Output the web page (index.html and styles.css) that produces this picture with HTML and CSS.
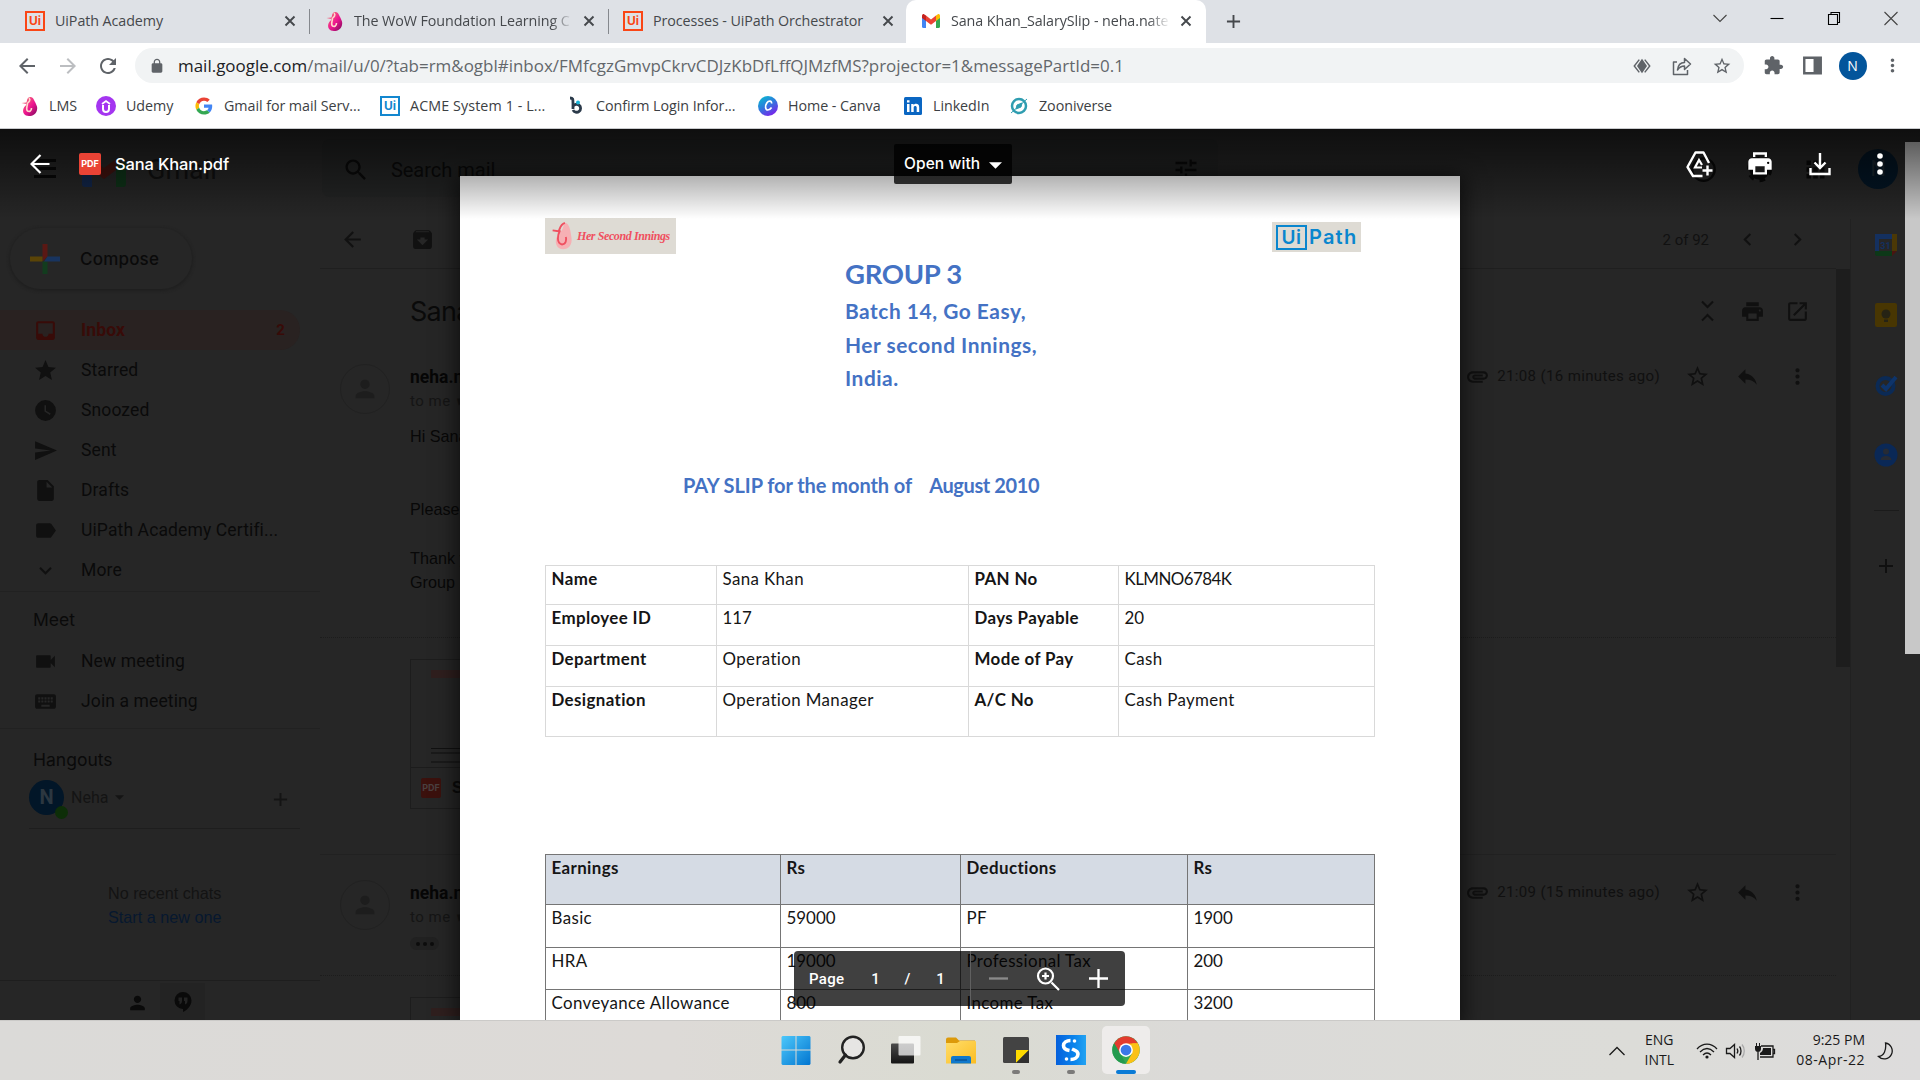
FILE: index.html
```html
<!DOCTYPE html>
<html lang="en">
<head>
<meta charset="utf-8">
<title>Sana Khan_SalarySlip</title>
<link rel="stylesheet" href="styles.css">
</head>
<body>
<svg width="0" height="0" class="defs">
  <defs>
    <linearGradient id="flame" x1="0" y1="0" x2="1" y2="1"><stop offset="0" stop-color="#f58a6b"/><stop offset=".55" stop-color="#ee1590"/><stop offset="1" stop-color="#7a0a5a"/></linearGradient>
    <linearGradient id="canva" x1="0" y1="0" x2=".6" y2="1"><stop offset="0" stop-color="#05c3cf"/><stop offset=".5" stop-color="#2a7fdc"/><stop offset="1" stop-color="#7428ea"/></linearGradient>
    <linearGradient id="win" x1="0" y1="0" x2="1" y2="1"><stop offset="0" stop-color="#4cc8fb"/><stop offset="1" stop-color="#0275d0"/></linearGradient>
    <linearGradient id="fold" x1="0" y1="0" x2="1" y2="1"><stop offset="0" stop-color="#ffdd6a"/><stop offset="1" stop-color="#fbbd22"/></linearGradient>
    <linearGradient id="dark" x1="0" y1="0" x2="0" y2="1"><stop offset="0" stop-color="#4a4a4a"/><stop offset="1" stop-color="#151515"/></linearGradient>
    <linearGradient id="sblue" x1="0" y1="0" x2="1" y2="0"><stop offset="0" stop-color="#0560dc"/><stop offset=".6" stop-color="#0a84ec"/><stop offset="1" stop-color="#22a3f2"/></linearGradient>
  </defs>
  <symbol id="i-star" viewBox="0 0 24 24"><path d="M12 17.27L18.18 21l-1.64-7.03L22 9.24l-7.19-.61L12 2 9.19 8.63 2 9.24l5.46 4.73L5.82 21z"/></symbol>
  <symbol id="i-starb" viewBox="0 0 24 24"><path d="M22 9.24l-7.19-.62L12 2 9.19 8.63 2 9.24l5.46 4.73L5.82 21 12 17.27 18.18 21l-1.63-7.03L22 9.24zM12 15.4l-3.76 2.27 1-4.28-3.32-2.88 4.38-.38L12 6.1l1.71 4.04 4.38.38-3.32 2.88 1 4.28L12 15.4z"/></symbol>
  <symbol id="i-clock" viewBox="0 0 24 24"><path fill-rule="evenodd" d="M12 2a10 10 0 1 0 0 20 10 10 0 0 0 0-20zm4.2 14.2L11 13V7h1.5v5.2l4.5 2.7-.8 1.3z"/></symbol>
  <symbol id="i-send" viewBox="0 0 24 24"><path d="M2.01 21L23 12 2.01 3 2 10l15 2-15 2z"/></symbol>
  <symbol id="i-file" viewBox="0 0 24 24"><path d="M6 2c-1.1 0-2 .9-2 2v16c0 1.1.9 2 2 2h12c1.1 0 2-.9 2-2V8l-6-6H6zm7 7V3.5L18.5 9H13z"/></symbol>
  <symbol id="i-label" viewBox="0 0 24 24"><path d="M17.63 5.84C17.27 5.33 16.67 5 16 5L5 5.01C3.9 5.01 3 5.9 3 7v10c0 1.1.9 1.99 2 1.99L16 19c.67 0 1.27-.33 1.63-.84L22 12l-4.37-6.16z"/></symbol>
  <symbol id="i-more" viewBox="0 0 24 24"><path d="M16.59 8.59L12 13.17 7.41 8.59 6 10l6 6 6-6z"/></symbol>
  <symbol id="i-cam" viewBox="0 0 24 24"><path d="M17 10.5V7c0-.55-.45-1-1-1H4c-.55 0-1 .45-1 1v10c0 .55.45 1 1 1h12c.55 0 1-.45 1-1v-3.5l4 4v-11l-4 4z"/></symbol>
  <symbol id="i-kbd" viewBox="0 0 24 24"><path d="M20 5H4c-1.1 0-1.99.9-1.99 2L2 17c0 1.1.9 2 2 2h16c1.1 0 2-.9 2-2V7c0-1.1-.9-2-2-2zm-9 3h2v2h-2V8zm0 3h2v2h-2v-2zM8 8h2v2H8V8zm0 3h2v2H8v-2zm-1 2H5v-2h2v2zm0-3H5V8h2v2zm9 7H8v-2h8v2zm0-4h-2v-2h2v2zm0-3h-2V8h2v2zm3 3h-2v-2h2v2zm0-3h-2V8h2v2z"/></symbol>
  <symbol id="i-inbox" viewBox="0 0 24 24"><path d="M19 3H4.99c-1.11 0-1.98.89-1.98 2L3 19c0 1.1.88 2 1.99 2H19c1.1 0 2-.9 2-2V5c0-1.11-.9-2-2-2zm0 12h-4c0 1.66-1.35 3-3 3s-3-1.34-3-3H4.99V5H19v10z"/></symbol>
  <symbol id="i-arch" viewBox="0 0 24 24"><path d="M20.54 5.23l-1.39-1.68C18.88 3.21 18.47 3 18 3H6c-.47 0-.88.21-1.16.55L3.46 5.23C3.17 5.57 3 6.02 3 6.5V19c0 1.1.9 2 2 2h14c1.1 0 2-.9 2-2V6.5c0-.48-.17-.93-.46-1.27zM12 17.5L6.5 12H10v-2h4v2h3.5L12 17.5zM5.12 5l.81-1h12l.94 1H5.12z"/></symbol>
  <symbol id="i-back" viewBox="0 0 24 24"><path d="M20 11H7.83l5.59-5.59L12 4l-8 8 8 8 1.41-1.41L7.83 13H20v-2z"/></symbol>
  <symbol id="i-person" viewBox="0 0 24 24"><path d="M12 12c2.21 0 4-1.79 4-4s-1.79-4-4-4-4 1.79-4 4 1.79 4 4 4zm0 2c-2.67 0-8 1.34-8 4v2h16v-2c0-2.66-5.33-4-8-4z"/></symbol>
  <symbol id="i-print" viewBox="0 0 24 24"><path d="M19 8H5c-1.66 0-3 1.34-3 3v6h4v4h12v-4h4v-6c0-1.66-1.34-3-3-3zm-3 11H8v-5h8v5zm3-7c-.55 0-1-.45-1-1s.45-1 1-1 1 .45 1 1-.45 1-1 1zm-1-9H6v4h12V3z"/></symbol>
  <symbol id="i-dots" viewBox="0 0 24 24"><path d="M12 8c1.1 0 2-.9 2-2s-.9-2-2-2-2 .9-2 2 .9 2 2 2zm0 2c-1.1 0-2 .9-2 2s.9 2 2 2 2-.9 2-2-.9-2-2-2zm0 6c-1.1 0-2 .9-2 2s.9 2 2 2 2-.9 2-2-.9-2-2-2z"/></symbol>
  <symbol id="i-reply" viewBox="0 0 24 24"><path d="M10 9V5l-7 7 7 7v-4.1c5 0 8.5 1.6 11 5.1-1-5-4-10-11-11z"/></symbol>
  <symbol id="i-open" viewBox="0 0 24 24"><path d="M19 19H5V5h7V3H5c-1.11 0-2 .9-2 2v14c0 1.1.89 2 2 2h14c1.1 0 2-.9 2-2v-7h-2v7zM14 3v2h3.59l-9.83 9.83 1.41 1.41L19 6.41V10h2V3h-7z"/></symbol>
  <symbol id="i-search" viewBox="0 0 24 24"><path d="M15.5 14h-.79l-.28-.27C15.41 12.59 16 11.11 16 9.5 16 5.91 13.09 3 9.5 3S3 5.91 3 9.5 5.91 16 9.5 16c1.61 0 3.09-.59 4.23-1.57l.27.28v.79l5 4.99L20.49 19l-4.99-5zm-6 0C7.01 14 5 11.99 5 9.5S7.01 5 9.5 5 14 7.01 14 9.5 11.99 14 9.5 14z"/></symbol>
  <symbol id="i-tune" viewBox="0 0 24 24"><path d="M3 17v2h6v-2H3zM3 5v2h10V5H3zm10 16v-2h8v-2h-8v-2h-2v6h2zM7 9v2H3v2h4v2h2V9H7zm14 4v-2H11v2h10zm-6-4h2V7h4V5h-4V3h-2v6z"/></symbol>
  <symbol id="i-clip" viewBox="0 0 24 24"><path d="M2 12.5C2 9.46 4.46 7 7.5 7H18c2.21 0 4 1.79 4 4s-1.79 4-4 4H9.5C8.12 15 7 13.88 7 12.5S8.12 10 9.5 10H17v2H9.41c-.55 0-.55 1 0 1H18c1.1 0 2-.9 2-2s-.9-2-2-2H7.5C5.57 9 4 10.57 4 12.5S5.57 16 7.5 16H17v2H7.5C4.46 18 2 15.54 2 12.5z"/></symbol>
  <symbol id="i-ext" viewBox="0 0 24 24"><path d="M20.5 11H19V7c0-1.1-.9-2-2-2h-4V3.5C13 2.12 11.88 1 10.5 1S8 2.12 8 3.5V5H4c-1.1 0-1.99.9-1.99 2v3.8H3.5c1.49 0 2.7 1.21 2.7 2.7s-1.21 2.7-2.7 2.7H2V20c0 1.1.9 2 2 2h3.8v-1.5c0-1.49 1.21-2.7 2.7-2.7 1.49 0 2.7 1.21 2.7 2.7V22H17c1.1 0 2-.9 2-2v-4h1.5c1.38 0 2.5-1.12 2.5-2.5S21.88 11 20.5 11z"/></symbol>
  <symbol id="i-reload" viewBox="0 0 24 24"><path d="M17.65 6.35C16.2 4.9 14.21 4 12 4c-4.42 0-7.99 3.58-7.99 8s3.57 8 7.99 8c3.73 0 6.84-2.55 7.73-6h-2.08c-.82 2.33-3.04 4-5.65 4-3.31 0-6-2.69-6-6s2.69-6 6-6c1.66 0 3.14.69 4.22 1.78L13 11h7V4l-2.35 2.35z"/></symbol>
  <symbol id="i-lock" viewBox="0 0 24 24"><path d="M18 8h-1V6c0-2.76-2.24-5-5-5S7 3.24 7 6v2H6c-1.1 0-2 .9-2 2v10c0 1.1.9 2 2 2h12c1.1 0 2-.9 2-2V10c0-1.1-.9-2-2-2zm-2.9 0H8.9V6c0-1.71 1.39-3.1 3.1-3.1 1.71 0 3.1 1.39 3.1 3.1v2z"/></symbol>
  <symbol id="i-x" viewBox="0 0 12 12"><path d="M1.5 1.5l9 9m0-9l-9 9" fill="none" stroke="currentColor" stroke-width="1.9"/></symbol>
  <symbol id="i-plus" viewBox="0 0 16 16"><path d="M8 1v14M1 8h14" fill="none" stroke="currentColor" stroke-width="2"/></symbol>
  <symbol id="i-caret" viewBox="0 0 10 5"><path d="M0 0h10L5 5z"/></symbol>
  <symbol id="i-flame" viewBox="0 0 18 20"><path d="M8 2c2-2 5-1 6 2 2 4 4 7 3 10-1 4-4 6-8 6-4.500 0-7-3.500-5.500-7.500C4.500 10 6 10 6.500 8L1.500 7l5-.5C7 5 7 3 8 2z" fill="url(#flame)"/><path d="M7.500 7c0 3-2 6 0 8 2 1 4 0 4-3M9 2c2 2 0 4-1.500 5" fill="none" stroke="#ffd8cc" stroke-width="1.600"/></symbol>
</svg>

<header class="browser">
  <div class="tabstrip">
    <div class="tab"><span class="fav ui orange">Ui</span><span class="title">UiPath Academy</span><svg class="close"><use href="#i-x"/></svg></div>
    <div class="tab"><svg class="fav"><use href="#i-flame"/></svg><span class="title fade">The WoW Foundation Learning C</span><svg class="close"><use href="#i-x"/></svg></div>
    <div class="tab"><span class="fav ui orange">Ui</span><span class="title">Processes - UiPath Orchestrator</span><svg class="close"><use href="#i-x"/></svg></div>
    <div class="tab active"><svg class="fav" viewBox="0 0 20 20"><path d="M1 5v10.500a1.500 1.500 0 0 0 1.500 1.500H5V8z" fill="#4285f4"/><path d="M19 5v10.500a1.500 1.500 0 0 1-1.500 1.500H15V8z" fill="#34a853"/><path d="M5 4.500L10 8.500l5-4V10l-5 3.800L5 10z" fill="#ea4335"/><path d="M15 4.500l1.600-1.100C17.800 2.600 19 3.400 19 5v2l-4 3z" fill="#fbbc04"/><path d="M5 4.500L3.400 3.400C2.200 2.600 1 3.400 1 5v2l4 3z" fill="#c5221f"/></svg><span class="title fade">Sana Khan_SalarySlip - neha.nate</span><svg class="close"><use href="#i-x"/></svg></div>
    <svg class="newtab"><use href="#i-plus"/></svg>
    <div class="winctl">
      <svg viewBox="0 0 20 20"><path d="M3.500 7l6.500 6.500L16.500 7"/></svg>
      <svg viewBox="0 0 20 20" class="blk"><path d="M3.500 10.500h13"/></svg>
      <svg viewBox="0 0 20 20" class="blk"><path d="M4.500 6.500h9v10h-9zM7 6V4.500h8.500v10H14"/></svg>
      <svg viewBox="0 0 20 20"><path d="M3.500 4l13 13m0-13l-13 13"/></svg>
    </div>
  </div>
  <div class="toolbar">
    <div class="nav">
      <svg><use href="#i-back"/></svg><svg class="off"><use href="#i-back"/></svg><svg><use href="#i-reload"/></svg>
    </div>
    <div class="omnibox">
      <svg class="lock"><use href="#i-lock"/></svg>
      <span class="url"><b>mail.google.com</b>/mail/u/0/?tab=rm&amp;ogbl#inbox/FMfcgzGmvpCkrvCDJzKbDfLffQJMzfMS?projector=1&amp;messagePartId=0.1</span>
      <div class="omni-icons">
        <svg viewBox="-1 -1 22 22"><path d="M7 3L1.500 10 7 17M13 3l5.500 7-5.500 7" fill="none" stroke="#5f6368" stroke-width="1.600"/><path d="M10 2l5.500 8-5.500 8-5.500-8z"/></svg>
        <svg viewBox="0 0 20 20"><path d="M5 6H1.500v12.500h14V14M5.500 14c.5-5 3-7.500 7-7.500V2.500l6 5.500-6 5.500V10c-3 0-5 1-7 4z" fill="none" stroke="#5f6368" stroke-width="1.500" stroke-linejoin="round"/></svg>
        <svg><use href="#i-starb"/></svg>
      </div>
    </div>
    <div class="tools">
      <svg><use href="#i-ext"/></svg>
      <svg viewBox="0 0 20 20"><path fill-rule="evenodd" d="M1 1.500h18v17H1zM3.300 3.800v12.400H11V3.800z"/></svg>
      <span class="avatar">N</span>
      <svg><use href="#i-dots"/></svg>
    </div>
  </div>
  <nav class="bookmarks">
    <a><svg><use href="#i-flame"/></svg><span>LMS</span></a>
    <a><svg viewBox="0 0 20 20"><circle cx="10" cy="10" r="10" fill="#a435f0"/><path d="M6 8l4-3 4 3" fill="none" stroke="#fff" stroke-width="1.700"/><path d="M7 9v4a3 3 0 0 0 6 0V9" fill="none" stroke="#fff" stroke-width="2"/></svg><span>Udemy</span></a>
    <a><svg viewBox="-4 -4 56 56"><path fill="#EA4335" d="M24 9.500c3.540 0 6.710 1.220 9.210 3.600l6.850-6.850C35.900 2.380 30.470 0 24 0 14.620 0 6.510 5.380 2.560 13.220l7.980 6.190C12.430 13.720 17.740 9.500 24 9.500z"/><path fill="#4285F4" d="M46.980 24.550c0-1.570-.15-3.090-.38-4.550H24v9.020h12.940c-.58 2.960-2.260 5.480-4.780 7.180l7.730 6c4.510-4.180 7.090-10.360 7.090-17.650z"/><path fill="#FBBC05" d="M10.530 28.590c-.48-1.450-.76-2.990-.76-4.590s.27-3.140.76-4.590l-7.980-6.190C.92 16.460 0 20.120 0 24s.92 7.540 2.560 10.780l7.970-6.190z"/><path fill="#34A853" d="M24 48c6.480 0 11.930-2.130 15.890-5.810l-7.730-6c-2.150 1.450-4.920 2.300-8.160 2.300-6.260 0-11.570-4.220-13.470-9.910l-7.980 6.190C6.510 42.620 14.620 48 24 48z"/></svg><span>Gmail for mail Serv...</span></a>
    <a class="wide"><span class="ui blue">Ui</span><span>ACME System 1 - L...</span></a>
    <a><svg viewBox="0 0 20 20"><path d="M4 2c3 0 3 1 3 5v6M7 10.500a4 4 0 1 1 0 3.500" fill="none" stroke="#2b3a4a" stroke-width="2.800"/><circle cx="12" cy="6.500" r="2" fill="#19b5d8"/></svg><span>Confirm Login Infor...</span></a>
    <a><svg viewBox="0 0 20 20"><circle cx="10" cy="10" r="10" fill="url(#canva)"/><path d="M13.500 7.500c.5-3-3-3-4.700-.5-2 3-1.500 7 1 7 2 0 3-1.300 3.800-2.500" fill="none" stroke="#fff" stroke-width="1.700"/></svg><span>Home - Canva</span></a>
    <a><svg viewBox="0 0 20 20"><rect x="1" y="1" width="18" height="18" rx="1.500" fill="#0a66c2"/><path d="M4 8h2.500v8H4zM4 4.300h2.500v2.300H4zM8.200 8h2.400v1.200c1.400-2.200 5.600-1.800 5.600 2V16h-2.500v-4.500c0-2-3-2-3 0V16H8.200z" fill="#fff"/></svg><span>LinkedIn</span></a>
    <a><svg viewBox="0 0 20 20"><circle cx="10" cy="10" r="7" fill="none" stroke="#2f9db0" stroke-width="2.500"/><path d="M2 17L18 3M13 7l-5 2-1 4 5-2z" fill="#2f9db0" stroke="#2f9db0"/></svg><span>Zooniverse</span></a>
  </nav>
</header>

<main class="view">
  <div class="gmail">
    <div class="ghead">
      <div class="burger"><i></i><i></i><i></i></div>
      <svg class="glogo" viewBox="0 0 44 34"><path d="M0 8v23a3 3 0 0 0 3 3h7V14z" fill="#12264a"/><path d="M44 8v23a3 3 0 0 1-3 3h-7V14z" fill="#0e3318"/><path d="M10 6l12 9L34 6v11L22 26 10 17z" fill="#42130f"/></svg>
      <span class="gname">Gmail</span>
      <div class="gsearch"><svg><use href="#i-search"/></svg><span>Search mail</span><svg class="tune"><use href="#i-tune"/></svg></div>
      <div class="gicons">
        <svg viewBox="0 0 24 24"><circle cx="12" cy="12" r="10" fill="none" stroke="currentColor" stroke-width="2"/></svg>
        <svg viewBox="0 0 24 24"><circle cx="12" cy="12" r="7" fill="none" stroke="currentColor" stroke-width="4"/><circle cx="12" cy="12" r="10" fill="none" stroke="currentColor" stroke-width="2.500" stroke-dasharray="5 5.470"/></svg>
        <svg viewBox="0 0 24 24"><path d="M4 4h4v4H4zM10 4h4v4h-4zM16 4h4v4h-4zM4 10h4v4H4zM10 10h4v4h-4zM16 10h4v4h-4zM4 16h4v4H4zM10 16h4v4h-4zM16 16h4v4h-4z"/></svg>
        <span class="gav">N</span>
      </div>
    </div>
    <div class="gbody">
      <aside class="side">
        <div class="compose"><svg viewBox="0 0 30 30"><path d="M12.500 0h5v12.500l-5 5z" fill="#5a1814"/><path d="M0 12.500h12.500v5H0z" fill="#5a4407"/><path d="M12.500 17.500h5V30h-5z" fill="#123c1e"/><path d="M17.500 12.500H30v5H14z" fill="#18345f"/></svg><span>Compose</span></div>
        <ul class="folders">
          <li class="sel"><svg><use href="#i-inbox"/></svg><span>Inbox</span><em>2</em></li>
          <li><svg><use href="#i-star"/></svg><span>Starred</span></li>
          <li><svg><use href="#i-clock"/></svg><span>Snoozed</span></li>
          <li><svg><use href="#i-send"/></svg><span>Sent</span></li>
          <li><svg><use href="#i-file"/></svg><span>Drafts</span></li>
          <li><svg><use href="#i-label"/></svg><span>UiPath Academy Certifi...</span></li>
          <li><svg><use href="#i-more"/></svg><span>More</span></li>
        </ul>
        <div class="meet">
          <h3>Meet</h3>
          <ul class="folders">
            <li><svg><use href="#i-cam"/></svg><span>New meeting</span></li>
            <li><svg><use href="#i-kbd"/></svg><span>Join a meeting</span></li>
          </ul>
        </div>
        <div class="hang">
          <h3>Hangouts</h3>
          <div class="me"><span class="hav">N<i></i></span><span>Neha</span><svg class="car"><use href="#i-caret"/></svg><svg class="add"><use href="#i-plus"/></svg></div>
          <p>No recent chats<br><a>Start a new one</a></p>
        </div>
        <div class="sidetabs"><span><svg><use href="#i-person"/></svg></span><span class="on"><svg viewBox="0 0 18 20"><path fill-rule="evenodd" d="M9 0a8.500 8.500 0 0 0 0 17v3c4-2 8.500-6 8.500-11.500A8.500 8.500 0 0 0 9 0zM4.500 5.500H8V9c0 2-1 3-2.500 3.500V9h-1zm5.500 0h3.500V9c0 2-1 3-2.500 3.500V9h-1z"/></svg></span></div>
      </aside>
      <section class="mail">
        <div class="mbar"><svg><use href="#i-back"/></svg><svg class="b2"><use href="#i-arch"/></svg><span class="count">2 of 92</span><svg class="chl" viewBox="0 0 24 24"><path d="M15.400 7.400L14 6l-6 6 6 6 1.400-1.400L10.800 12z"/></svg><svg viewBox="0 0 24 24"><path d="M8.600 16.600L10 18l6-6-6-6-1.400 1.400L13.200 12z"/></svg></div>
        <div class="subject"><h1>Sana Khan_SalarySlip</h1><div class="acts"><svg viewBox="0 0 24 24"><path d="M7.400 18.600L6 20l1.400 1.400L12 16.800l4.600 4.600L18 20l-6-6zM16.600 1.600L12 6.200 7.400 1.600 6 3l6 6 6-6z"/></svg><svg><use href="#i-print"/></svg><svg><use href="#i-open"/></svg></div></div>
        <article class="msg first">
          <div class="mhead"><span class="pic"><svg><use href="#i-person"/></svg></span><div class="who"><b>neha.nate</b><small>to me <i>▾</i></small></div><div class="meta"><svg class="clip"><use href="#i-clip"/></svg><span>21:08 (16 minutes ago)</span><svg><use href="#i-starb"/></svg><svg><use href="#i-reply"/></svg><svg><use href="#i-dots"/></svg></div></div>
          <div class="txt"><p>Hi Sana,</p><p class="gap1">Please</p><p class="gap2">Thank you</p><p>Group 3</p></div>
          <div class="att"><div class="thumb"><i></i><em></em></div><div class="cap"><span class="pdf">PDF</span><b>S</b></div></div>
        </article>
        <article class="msg next">
          <div class="mhead"><span class="pic"><svg><use href="#i-person"/></svg></span><div class="who"><b>neha.nate</b><small>to me <i>▾</i></small></div><div class="meta"><svg class="clip"><use href="#i-clip"/></svg><span>21:09 (15 minutes ago)</span><svg><use href="#i-starb"/></svg><svg><use href="#i-reply"/></svg><svg><use href="#i-dots"/></svg></div></div>
          <div class="more"><div class="ell"><i></i><i></i><i></i></div></div>
          <div class="att"><div class="thumb"><i></i></div></div>
        </article>
      </section>
      <div class="track"><i></i></div>
      <aside class="apps">
        <svg viewBox="0 0 24 24"><path d="M1 1h17v17H1z" fill="#14305f"/><path d="M18 1h5v17h-5z" fill="#4b3806"/><path d="M1 18h17v5H3a2 2 0 0 1-2-2z" fill="#0d3818"/><path d="M18 18h5l-5 5z" fill="#4a1510"/><path d="M5 6h13v12H5z" fill="#262626"/><text x="11.500" y="15.500" text-anchor="middle" class="cal">31</text></svg>
        <svg viewBox="0 0 24 24"><rect x="1" width="22" height="24" rx="2" fill="#483602"/><circle cx="12" cy="11" r="4.500" fill="#262314"/><path d="M10 16.500h4v2.500h-4z" fill="#262314"/></svg>
        <svg viewBox="0 0 24 24"><circle cx="11.500" cy="13" r="8" fill="none" stroke="#0b2a55" stroke-width="4"/><path d="M8 12l4 4L22 4" fill="none" stroke="#0e346a" stroke-width="4"/></svg>
        <svg viewBox="0 0 24 24"><circle cx="12" cy="12" r="11.500" fill="#0a2856"/><circle cx="12" cy="8.500" r="3" fill="#262b35"/><path d="M6.500 17c0-5.500 11-5.500 11 0z" fill="#262b35"/></svg>
        <hr>
        <svg class="add"><use href="#i-plus"/></svg>
        <svg class="last" viewBox="0 0 24 24"><path d="M8 18l6-6-6-6" fill="none" stroke="#0a0a0a" stroke-width="2.500"/></svg>
      </aside>
    </div>
  </div>

  <div class="viewer">
    <div class="page">
      <div class="logos">
        <div class="hsi"><svg viewBox="0 0 24 36"><path d="M13 4c6-1 7 9 8 16s-3 12-9 12-9-6-7-12 7-5 8-16z" fill="#f6b0b4"/><path d="M14 4c-6 2-5 8-7 9l-6-1M9 12c-3 5-4 14 2 15 4 0 5-5 4-8" fill="none" stroke="#ef5060" stroke-width="2"/></svg><span>Her Second Innings</span></div>
        <div class="uip"><b>Ui</b><span>Path</span></div>
      </div>
      <div class="company"><h2>GROUP 3</h2><p>Batch 14, Go Easy,</p><p>Her second Innings,</p><p>India.</p></div>
      <h3 class="slip"><span>PAY SLIP for the month of</span><span class="month">August 2010</span></h3>
      <table class="info">
        <colgroup><col class="c1"><col class="c2"><col class="c3"><col class="c4"></colgroup>
        <tr class="r39"><th>Name</th><td>Sana Khan</td><th>PAN No</th><td class="pan">KLMNO6784K</td></tr>
        <tr class="r41"><th>Employee ID</th><td class="n">117</td><th>Days Payable</th><td class="n">20</td></tr>
        <tr class="r42"><th>Department</th><td>Operation</td><th>Mode of Pay</th><td>Cash</td></tr>
        <tr class="r50"><th>Designation</th><td>Operation Manager</td><th>A/C No</th><td>Cash Payment</td></tr>
      </table>
      <table class="pay">
        <colgroup><col class="c1"><col class="c2"><col class="c3"><col class="c4"></colgroup>
        <tr class="r50"><th>Earnings</th><th>Rs</th><th>Deductions</th><th>Rs</th></tr>
        <tr class="r43"><td>Basic</td><td class="n">59000</td><td>PF</td><td class="n">1900</td></tr>
        <tr class="r43"><td>HRA</td><td class="n">19000</td><td>Professional Tax</td><td class="n">200</td></tr>
        <tr class="r43"><td>Conveyance Allowance</td><td class="n">800</td><td>Income Tax</td><td class="n">3200</td></tr>
      </table>
    </div>
    <i class="vscroll"></i>
    <div class="vbar">
      <svg class="vback" viewBox="0 0 20 20"><path d="M19.500 10H2M10.500 1L1.500 10l9 9" fill="none" stroke="#fff" stroke-width="2.200"/></svg>
      <span class="pdf">PDF</span><span class="vname">Sana Khan.pdf</span>
      <div class="openwith"><span>Open with</span><svg><use href="#i-caret"/></svg></div>
      <div class="vicons">
        <svg viewBox="0 0 28 28"><path d="M16.500 26H7L1.500 17 9.500 2.500h8L23 13" fill="none" stroke="#fff" stroke-width="2.400" stroke-linejoin="round"/><path d="M16 17.500H9L13 10l3 5" fill="none" stroke="#fff" stroke-width="2.200"/><path d="M21.500 15.500v10M16.500 20.500h10" stroke="#fff" stroke-width="2.400"/></svg>
        <svg viewBox="0 0 24 24"><path fill-rule="evenodd" d="M19 7H5c-1.660 0-3 1.340-3 3v7h4v4h12v-4h4v-7c0-1.660-1.340-3-3-3zm-3 12H8v-5h8v5zm3-7a1 1 0 1 1 0-2 1 1 0 0 1 0 2zM18 2H6v4h12V2zM8 4h8v2H8z"/></svg>
        <svg viewBox="0 0 28 28"><path d="M14 3v15M8.500 12.500L14 18l5.500-5.500M4.500 18v6h19v-6" fill="none" stroke="#fff" stroke-width="2.400"/></svg>
        <svg viewBox="0 0 28 28"><circle cx="14" cy="6" r="2.800"/><circle cx="14" cy="14" r="2.800"/><circle cx="14" cy="22" r="2.800"/></svg>
      </div>
    </div>
    <div class="pager"><span class="pg">Page</span><span>1</span><span>/</span><span>1</span><i></i><svg class="minus" viewBox="0 0 18 18"><path d="M0 9h18"/></svg><svg class="zm" viewBox="0 0 24 24"><path d="M15.500 15.500L23 23M9.500 5.500v7M6 9h7"/><circle cx="9.500" cy="9" r="7.500"/></svg><svg class="pl" viewBox="0 0 18 18"><path d="M0 9h18M9 0v18"/></svg></div>
  </div>
</main>

<footer class="taskbar">
  <div class="dock">
    <span><svg viewBox="0 0 30 30"><path d="M1.500 1H14.500v13.500H.5V2zM15.500 1H28.500l1 1v12.500h-14zM.5 15.500h14V30H1.500l-1-1zM15.500 15.500h14V29l-1 1h-13z" fill="url(#win)"/></svg></span>
    <span><svg viewBox="0 0 30 30"><circle cx="17" cy="12.500" r="10.800" fill="#e6e5e3" stroke="#222" stroke-width="2.400"/><path d="M9.500 20L4 27" stroke="#222" stroke-width="3.200" stroke-linecap="round"/></svg></span>
    <span><svg viewBox="0 0 30 30"><rect y="8.500" width="23" height="20" rx="1" fill="url(#dark)"/><rect x="7.500" y="1" width="22" height="19.500" rx="1" fill="#fff" fill-opacity=".72"/></svg></span>
    <span><svg viewBox="0 0 30 30"><path d="M0 4.500a2 2 0 0 1 2-2h8l3 3h16v5H0z" fill="#dc9a0a"/><path d="M0 8h11l3-2h15a1 1 0 0 1 1 1v21.500H0z" fill="url(#fold)"/><path d="M5 28.500V23a2 2 0 0 1 2-2h16a2 2 0 0 1 2 2v5.500z" fill="#0f78cc"/><path d="M9 25h12" stroke="#064a8c" stroke-width="1.200"/></svg></span>
    <span class="run"><svg viewBox="0 0 30 30"><rect x="2" y="2" width="26" height="26" rx="1.500" fill="#434343"/><path d="M15 28V15h13z" fill="#fedb00"/><path d="M15 28L28 15v13z" fill="#303030"/></svg></span>
    <span class="run"><svg viewBox="0 0 30 30"><path d="M0 0h30v30H0z" fill="url(#sblue)"/><path d="M14.500 5.500c-4 0-7 2-7 5s3 4.500 6 5M14.500 24.500c4 0 7.500-2 7.500-5.500s-4-4-6-5" fill="none" stroke="#fff" stroke-width="3.600"/><circle cx="18.500" cy="6" r="1.800" fill="#fff"/><circle cx="10.500" cy="24" r="1.800" fill="#fff"/></svg></span>
    <span class="cur"><svg viewBox="0 0 48 48"><circle cx="24" cy="24" r="22" fill="#34a853"/><path d="M5 13A22 22 0 0 1 43 13L24 24z" fill="#e33b2e"/><path d="M43 13A22 22 0 0 1 24 46L33.500 29.500 34 13z" fill="#fbc116"/><path d="M24 13.500h19.300L33 29z" fill="#fbc116"/><path d="M5 13l9.500 16.500L24 24l6-10.500z" fill="#e33b2e"/><path d="M5 13l10 17 9 16A22 22 0 0 1 5 13z" fill="#239a4e"/><circle cx="24" cy="24" r="11" fill="#fff"/><circle cx="24" cy="24" r="8.600" fill="#3a78e8"/></svg></span>
  </div>
  <div class="tray">
    <svg class="up" viewBox="0 0 16 16"><path d="M.5 12L8 4.500l7.500 7.500"/></svg>
    <div class="lang"><span>ENG</span><span>INTL</span></div>
    <div class="sys">
      <svg viewBox="0 0 22 18"><path d="M1 7c6-6.500 14-6.500 20 0M4 10c4.500-4.500 9.500-4.500 14 0M7 13c2.500-2.500 5.500-2.500 8 0"/><circle cx="11" cy="15" r="1.600" fill="#1a1a1a" stroke="none"/></svg>
      <svg viewBox="0 0 22 18"><path d="M1.500 6.500v5h3.500l4.500 4V2.500L5 6.500zM12 6.500c1 1.500 1 3.500 0 5M14.500 4.500c2 2.500 2 6.500 0 9"/><path d="M17 2.500c3 3.500 3 9.500 0 13" stroke="#aaa"/></svg>
      <svg viewBox="0 0 22 18"><path d="M7 4h12v11H6M19 7.500h1.500v4H19M4 10v8"/><path d="M1 4h6v3c0 4-6 4-6 0zM2 1h1v3H2zM5 1h1v3H5zM9 6h8v7H6v-2c2-1 3-3 3-5z" fill="#1a1a1a" stroke="none"/></svg>
    </div>
    <div class="time"><span>9:25 PM</span><span class="date">08-Apr-22</span></div>
    <svg class="moon" viewBox="0 0 18 18"><path d="M8.500 1a8 8 0 1 1-7 13.500C7 14 9.500 8 8.500 1z"/></svg>
  </div>
</footer>
</body>
</html>
```
FILE: styles.css
```css
* { box-sizing: border-box; }
body { margin: 0; width: 1920px; height: 1080px; overflow: hidden; display: flex; flex-direction: column; font-family: "Open Sans", "Noto Sans", sans-serif; }
svg { display: block; flex: none; fill: currentColor; }
ul, p, h1, h2, h3 { margin: 0; padding: 0; list-style: none; }
.defs { position: absolute; }

/* browser frame */
.browser { height: 129px; background: #fff; border-bottom: 1px solid #c9cbce; flex: none; }
.tabstrip { height: 43px; background: #dee1e6; display: flex; padding-left: 10px; align-items: stretch; color: #45484c; }
.tab { width: 299px; padding: 0 13px 2px 15px; display: flex; align-items: center; font-size: 14.300px; letter-spacing: -.08px; position: relative; }
.tab:nth-child(-n+2)::after { content: ""; position: absolute; right: -1px; top: 9px; width: 1px; height: 25px; background: #85888d; }
.tab.active { background: #fff; border-radius: 10px 10px 0 0; margin-left: -1px; width: 300px; padding-right: 14px; }
.fav { width: 20px; height: 20px; margin-right: 10px; }
.ui { width: 20px; height: 20px; flex: none; border: 2px solid; font: 700 12px/16px Inter, sans-serif; letter-spacing: 0; text-align: center; }
.title { flex: 1; overflow: hidden; white-space: nowrap; line-height: 20px; }
.title.fade { -webkit-mask-image: linear-gradient(90deg, #000 90%, transparent); mask-image: linear-gradient(90deg, #000 90%, transparent); margin-right: 10px; }
.close { width: 12px; height: 12px; }
.orange { color: #fa4616; }
.bookmarks .blue { color: #1387cf; }
.newtab { width: 15px; height: 15px; margin: 14px 0 0 20px; }
.winctl { margin-left: auto; display: flex; gap: 37px; padding: 8px 19px 0 0; }
.winctl svg { width: 20px; height: 20px; fill: none; stroke: #444; stroke-width: 1.100; }
.winctl .blk { stroke: #000; }
.toolbar { height: 45px; display: flex; align-items: center; padding: 0 17px 0 15px; color: #5f6368; }
.nav { display: flex; width: 120px; gap: 16.500px; }
.nav svg { width: 24px; height: 24px; }
.nav .off { color: #bcbec1; transform: scaleX(-1); }
.omnibox { width: 1609px; height: 35px; border-radius: 18px; background: #f1f3f4; display: flex; align-items: center; padding: 0 12px 0 14px; }
.lock { width: 16px; height: 16px; margin-right: 13px; }
.url { font-size: 16.970px; color: #63676b; white-space: nowrap; }
.url b { font-weight: 400; color: #202124; }
.omni-icons { margin-left: auto; display: flex; gap: 20px; align-items: center; }
.omni-icons svg { width: 20px; height: 20px; }
.tools { margin-left: auto; display: flex; align-items: center; gap: 18.500px; }
.tools svg { width: 21px; height: 21px; }
.avatar { width: 28px; height: 28px; border-radius: 50%; background: #03559b; color: #fff; font-size: 14px; line-height: 28px; text-align: center; margin: 0 -3px; }
.bookmarks { height: 35px; display: grid; grid-template-columns: 77px 98px 186px 186px 192px 145px 106px 120px; padding-left: 19px; }
.bookmarks a { display: flex; align-items: center; gap: 10px; font-size: 14.300px; letter-spacing: -.06px; color: #3c4043; white-space: nowrap; }
.bookmarks .wide { letter-spacing: .1px; }
.bookmarks svg { width: 20px; height: 20px; }

/* mail page under the scrim */
.view { height: 891px; flex: none; position: relative; overflow: hidden; background: #262626; }
.gmail { height: 891px; font-family: Roboto, sans-serif; color: #0a0a0a; display: flex; flex-direction: column; }
.ghead { height: 90px; flex: none; display: flex; align-items: center; padding: 0 22px 12px 34px; }
.burger { width: 22px; display: grid; gap: 5px; }
.burger i { height: 3px; background: #080808; }
.glogo { width: 44px; height: 34px; margin-left: 26px; margin-top: 4px; }
.gname { margin-left: 21px; font-size: 27px; color: #101010; margin-top: 4px; }
.gsearch { margin-left: 105px; width: 896px; height: 58px; display: flex; align-items: center; font-size: 20px; background: #232424; border-radius: 8px; padding: 4px 18px 0 20px; }
.gsearch svg { width: 28px; height: 28px; margin-right: 21px; }
.gsearch .tune { margin: 0 0 0 auto; }
.gicons { margin-left: auto; display: flex; gap: 29px; align-items: center; color: #080808; padding-top: 2px; }
.gicons svg { width: 27px; height: 27px; }
.gav { width: 40px; height: 40px; border-radius: 50%; background: #031524; color: #1a2630; font-size: 22px; line-height: 40px; text-align: center; }
.gbody { flex: 1; display: flex; }
.side { width: 320px; display: flex; flex-direction: column; }
.compose { margin: 9px 0 21px 10px; width: 182px; height: 61px; border-radius: 31px; box-shadow: 0 1px 3px 1px #1f1f1f; display: flex; align-items: center; gap: 20px; padding-left: 20px; font: 500 17px Inter, sans-serif; letter-spacing: .2px; }
.compose svg { width: 30px; height: 30px; }
.folders li { height: 40px; display: flex; align-items: center; padding-left: 33px; font-size: 17.500px; letter-spacing: .12px; }
.folders svg { width: 25px; height: 25px; margin-right: 23px; color: #101010; }
.folders em { margin-left: auto; margin-right: 15px; font-style: normal; font-size: 15px; }
.folders .sel { width: 300px; background: #292221; border-radius: 0 20px 20px 0; font-weight: 700; color: #380b08; }
.folders .sel svg { color: #380b08; }
.meet { border-top: 1px solid #212121; margin-top: 1px; height: 137px; padding-top: 17px; }
.side h3 { font: 400 17.500px/22px Inter, sans-serif; margin-left: 33px; }
.meet .folders { margin-top: 10px; }
.hang { border-top: 1px solid #212121; height: 252px; padding-top: 20px; }
.me { margin: 6px 20px 0 29px; height: 52px; border-bottom: 1px solid #1e1e1e; display: flex; align-items: center; padding-bottom: 11px; font-size: 16px; color: #141414; }
.hav { width: 35px; height: 35px; border-radius: 50%; background: #021628; color: #2c3740; font-size: 20px; font-weight: 700; line-height: 35px; text-align: center; position: relative; margin-right: 7px; }
.hav i { position: absolute; right: -4px; bottom: -4px; width: 13px; height: 13px; border-radius: 50%; background: #0d2e08; }
.car { width: 9px; height: 5px; margin-left: 7px; }
.me .add { width: 15px; height: 15px; margin-left: auto; margin-right: 12px; margin-top: 5px; }
.hang p { margin: 52px 0 0 108px; font: 16.200px/24px "Liberation Sans", sans-serif; color: #131313; }
.hang a { color: #07182f; }
.sidetabs { border-top: 1px solid #1e1e1e; flex: 1; display: flex; padding: 2px 0 0 115px; }
.sidetabs span { width: 45px; display: flex; justify-content: center; padding-top: 9px; }
.sidetabs .on { background: #232323; }
.sidetabs svg { width: 25px; height: 22px; }
.sidetabs .on svg { width: 18px; height: 20px; }
.mail { width: 1516px; overflow: hidden; white-space: nowrap; }
.mbar { height: 50px; border-bottom: 1px solid #1f1f1f; display: flex; align-items: center; padding: 0 26px 8px 20px; color: #111; }
.mbar svg { width: 25px; height: 25px; }
.mbar .b2 { margin-left: 45px; }
.count { margin-left: auto; margin-right: 1px; font-size: 15px; }
.mbar .chl { margin: 0 25px 0 25px; }
.subject { display: flex; height: 84px; align-items: center; padding: 0 26px 0 90px; color: #0a0a0a; }
.subject h1 { font: 400 27px Inter, sans-serif; letter-spacing: -.7px; flex: 1; }
.acts { display: flex; gap: 20px; color: #101010; }
.acts svg { width: 25px; height: 25px; }
.msg { border-bottom: 1px solid #212121; }
.first { height: 502px; }
.mhead { height: 62px; padding: 11px 26px 0 20px; display: flex; }
.next .mhead { height: 76px; padding-top: 25px; }
.pic { width: 50px; height: 50px; border-radius: 50%; border: 1px solid #212121; display: flex; align-items: center; justify-content: center; color: #1d1d1d; margin-right: 20px; }
.pic svg { width: 28px; height: 28px; }
.who { flex: 1; display: flex; flex-direction: column; font-size: 17.500px; line-height: 24px; margin-top: 1px; color: #060606; }
.who b { font-weight: 700; }
.who small { font-size: 15px; letter-spacing: .5px; color: #151515; }
.meta { display: flex; height: 24px; align-items: center; font-size: 15px; letter-spacing: .36px; color: #101010; }
.meta svg { width: 25px; height: 25px; }
.meta .clip { margin-right: 7px; }
.meta svg + svg, .meta span + svg { margin-left: 25px; }
.txt { padding-left: 90px; font: 16.200px/24px "Liberation Sans", sans-serif; height: 223px; border-bottom: 1px dotted #1c1c1c; padding-top: 9px; color: #080808; }
.gap1 { margin-top: 49px; }
.gap2 { margin-top: 25px; }
.more { height: 45px; border-bottom: 1px dotted #1c1c1c; padding: 6px 0 0 90px; }
.att { margin: 21px 0 0 90px; width: 225px; height: 150px; border: 1px solid #1d1d1d; }
.thumb { height: 108px; border-bottom: 1px solid #1c1c1c; padding: 10px 0 0 20px; }
.thumb i { display: block; width: 40px; height: 8px; background: #2f1f1e; }
.thumb em { display: block; margin-top: 70px; width: 60px; height: 18px; border-top: 1px solid #111; background: repeating-linear-gradient(#262626 0 3px, #1a1a1a 3px 5px, #262626 5px 9px); }
.cap { display: flex; align-items: center; padding: 10px; gap: 11px; }
.cap b { font: 700 16px "Liberation Sans", sans-serif; }
.pdf { width: 22px; height: 22px; border-radius: 2px; background: #ea4335; color: #fff; font: 700 9px/22px Inter, sans-serif; text-align: center; }
.cap .pdf { background: #3b110d; color: #4a4040; width: 20px; height: 20px; line-height: 20px; }
.ell { width: 29px; height: 13px; border-radius: 7px; background: #212121; display: flex; align-items: center; justify-content: center; gap: 3px; }
.ell i { width: 4px; height: 4px; border-radius: 50%; background: #0c0c0c; }
.track { width: 14px; padding-top: 50px; }
.track i { display: block; height: 398px; background: #1d1d1d; }
.apps { flex: 1; border-left: 1px solid #212121; padding: 14px 0 0 23px; display: flex; flex-direction: column; }
.apps > svg { width: 24px; height: 24px; margin-bottom: 46px; }
.apps hr { width: 25px; height: 1px; border: 0; margin: -3px 0 47px; background: #1b1b1b; }
.apps .add { width: 16px; height: 16px; margin-left: 4px; color: #101010; }
.apps .last { margin: auto 0 22px; }
.cal { font: 700 9px Roboto, sans-serif; fill: #14305f; }

/* file viewer over the mail */
.viewer { position: absolute; inset: 0; padding-left: 460px; }
.page { width: 1000px; height: 844px; margin-top: 47px; background: #fff; box-shadow: 0 4px 20px 4px rgba(0,0,0,.6); padding: 42px 86px 0 85px; font-family: Lato, sans-serif; overflow: hidden; color: #151515; }
.logos { display: flex; justify-content: space-between; align-items: flex-end; padding-right: 13px; }
.hsi { width: 131px; height: 36px; background: #dedbd4; display: flex; align-items: center; padding-left: 6px; color: #f0505f; font: italic 700 12px "Liberation Serif", serif; letter-spacing: -.4px; gap: 2px; white-space: nowrap; }
.hsi svg { width: 24px; height: 34px; }
.uip { width: 89px; height: 30px; margin-bottom: 2px; background: #dedbd4; display: flex; align-items: center; padding-left: 4px; color: #0a86ce; font: 600 20px Inter, sans-serif; letter-spacing: 1.200px; }
.uip b { width: 31px; height: 25px; border: 2px solid; line-height: 21px; font-size: 19px; font-weight: 600; letter-spacing: .5px; text-align: center; margin-right: 2px; }
.company { margin: 1px 0 0 300px; color: #4472c4; font-weight: 700; font-size: 20.900px; letter-spacing: .53px; height: 194px; white-space: nowrap; }
.company h2 { font-size: 27.500px; line-height: 37px; letter-spacing: -.3px; margin-bottom: 2px; }
.company p { line-height: 33.500px; }
.slip { margin: 24px 0 0 138px; height: 92px; font-size: 20px; line-height: 24px; letter-spacing: -.06px; color: #4472c4; display: flex; gap: 17px; white-space: nowrap; }
.slip .month { letter-spacing: -.38px; }
table { border-collapse: collapse; table-layout: fixed; width: 829px; font-size: 16.900px; letter-spacing: .38px; }
td, th { vertical-align: top; text-align: left; padding: 2px 0 0 5.500px; line-height: 21px; border: 1px solid #d9d9d9; white-space: nowrap; }
.n { letter-spacing: 0; }
.pan { letter-spacing: -.55px; }
.info .c1 { width: 171px; } .info .c2 { width: 252px; } .info .c3 { width: 150px; } .info .c4 { width: 256px; }
.pay { margin-top: 117px; }
.pay .c1 { width: 235px; } .pay .c2 { width: 180px; } .pay .c3 { width: 227px; } .pay .c4 { width: 187px; }
.pay td, .pay th { border-color: #757575; }
.pay th { background: #d5dbe4; }
.r39 { height: 39px; } .r41 { height: 41px; } .r42 { height: 41px; } .r50 { height: 50px; } .r43 { height: 42.500px; }
.vscroll { position: absolute; right: 0; top: 13px; width: 15px; height: 512px; background: #c8c8c8; }
.vbar { position: absolute; left: 0; top: 0; width: 1920px; height: 90px; background: linear-gradient(rgba(0,0,0,.62), rgba(0,0,0,.3) 52%, transparent); display: flex; padding: 15px 26px 0 30px; align-items: flex-start; color: #fff; font: 500 16.500px/22px Inter, sans-serif; letter-spacing: -.15px; }
.vback { width: 20px; height: 20px; margin: 10px 29px 0 0; }
.vbar .pdf { margin: 9px 14px 0 0; letter-spacing: 0; }
.vname { margin-top: 9px; white-space: nowrap; }
.openwith { position: absolute; left: 894px; top: 15px; width: 118px; height: 40px; border-radius: 2px; background: rgba(0,0,0,.78); display: flex; align-items: center; justify-content: space-between; padding: 0 10px; font-size: 15.500px; letter-spacing: .1px; white-space: nowrap; }
.openwith svg { width: 13px; height: 7px; margin-top: 3px; }
.vicons { margin-left: auto; display: flex; gap: 32px; padding-top: 6px; }
.vicons svg { width: 28px; height: 28px; }
.pager { position: absolute; left: 794px; top: 822px; width: 331px; height: 55px; border-radius: 4px; background: rgba(0,0,0,.75); display: grid; grid-template-columns: 66px 31px 33px 33px 14px 37px 80px 20px; align-items: center; color: #fff; font: 500 15px Roboto, sans-serif; }
.pager span { text-align: center; }
.pager .pg { padding-left: 15px; text-align: left; letter-spacing: .3px; }
.pager i { justify-self: end; width: 1px; height: 55px; background: #606060; }
.pager svg { width: 19px; height: 19px; justify-self: center; fill: none; stroke: #fff; stroke-width: 2.200; }
.pager .minus { stroke: #8a8a8a; justify-self: end; }
.pager .zm { width: 24px; height: 24px; }

/* taskbar */
.taskbar { height: 60px; flex: none; background: linear-gradient(90deg, #dbdad8, #dddad7 35%, #dadbd2 50%, #dbdad8 62%, #dcdcd8 85%, #dddcdc); border-top: 1px solid #cbcac8; display: flex; justify-content: space-between; padding: 0 25px 0 772px; color: #1a1a1a; }
.dock { display: flex; gap: 7px; padding-top: 5px; }
.dock span { width: 48px; height: 48px; padding: 9px; position: relative; }
.dock svg { width: 30px; height: 30px; }
.dock .cur { background: #eeeceb; border-radius: 5px; }
.run::after, .cur::after { content: ""; position: absolute; left: 20px; bottom: 0; width: 8px; height: 4px; border-radius: 2px; background: #7b7a79; }
.cur::after { left: 14px; width: 20px; background: #0a7bd6; }
.tray { display: flex; align-items: center; font-size: 14px; line-height: 20px; }
.tray svg { fill: none; stroke: #1a1a1a; stroke-width: 1.300; }
.up { width: 16px; height: 16px; margin-right: 20px; }
.lang, .time { display: flex; flex-direction: column; align-items: center; margin-top: -1px; }
.time { align-items: flex-end; width: 70px; margin-right: 12px; white-space: nowrap; }
.date { letter-spacing: .5px; }
.sys { display: flex; gap: 7px; margin: 0 19px 0 22px; }
.sys svg { width: 22px; height: 18px; }
.moon { width: 18px; height: 18px; }
```
